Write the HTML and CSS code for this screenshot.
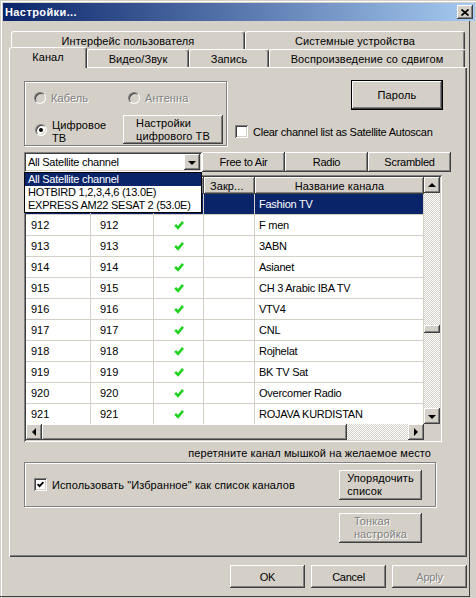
FILE: index.html
```html
<!DOCTYPE html>
<html lang="ru">

<head>
  <meta charset="UTF-8">
  <title>Настройки...</title>
  <link rel="stylesheet" href="styles.css">
</head>

<body>
  <div class="window">
    <div class="titlebar">
      <span class="title">Настройки...</span>
      <span class="close">
        <svg width="8" height="7" viewBox="0 0 8 7"><path d="M0.5 0.5 L7.5 6.5 M7.5 0.5 L0.5 6.5" stroke="#000" stroke-width="1.7" fill="none"/></svg>
      </span>
    </div>

    <div class="client">
      <div class="tabs">
        <div class="tab-row back">
          <div class="tab w-ui">Интерфейс пользователя</div>
          <div class="tab w-sys">Системные устройства</div>
        </div>
        <div class="tab-row front">
          <div class="tab w-chan active">Канал</div>
          <div class="tab w-video">Видео/Звук</div>
          <div class="tab w-rec">Запись</div>
          <div class="tab w-shift">Воспроизведение со сдвигом</div>
        </div>
      </div>

      <div class="page">
        <div class="top-row">
          <div class="group group-mode">
            <div class="radio-row">
              <div class="radio-item"><span class="radio off"></span><span class="disabled">Кабель</span></div>
              <div class="radio-item"><span class="radio off"></span><span class="disabled">Антенна</span></div>
            </div>
            <div class="dtv-row">
              <div class="radio-item dtv"><span class="radio on"></span><span class="two-line">Цифровое<br>ТВ</span></div>
              <div class="btn btn-dtv"><span class="btn-lines">Настройки<br>цифрового ТВ</span></div>
            </div>
          </div>

          <div class="right-col">
            <div class="btn btn-default btn-pass">Пароль</div>
            <div class="check-row">
              <span class="check"></span>
              <span class="lat">Clear channel list as Satellite Autoscan</span>
            </div>
          </div>
        </div>

        <div class="filter-row">
          <div class="combo">
            <span class="lat">All Satellite channel</span>
            <span class="combo-btn"><span class="arr-down"></span></span>
          </div>
          <div class="btn filter-btn lat">Free to Air</div>
          <div class="btn filter-btn lat">Radio</div>
          <div class="btn filter-btn lat">Scrambled</div>
        </div>

        <div class="list lat">
          <div class="grid-body">
            <!-- first three headers sit under the open combo list -->
            <div class="hdr">
              <div class="hdr-cell c1"></div>
              <div class="hdr-cell c2"></div>
              <div class="hdr-cell c3"></div>
              <div class="hdr-cell c4 cyr">Закр...</div>
              <div class="hdr-cell c5 center cyr">Название канала</div>
            </div>
            <div class="row sel">
              <div class="cell c1"></div><div class="cell c2"></div><div class="cell c3"></div><div class="cell c4"></div><div class="cell c5">Fashion TV</div>
            </div>
            <div class="row">
              <div class="cell c1">912</div><div class="cell c2">912</div><div class="cell c3"><svg class="ok" width="10" height="10" viewBox="0 0 10 10"><path d="M1.2 4.8 L4 7.8 L9 1.8" /></svg></div><div class="cell c4"></div><div class="cell c5">F men</div>
            </div>
            <div class="row">
              <div class="cell c1">913</div><div class="cell c2">913</div><div class="cell c3"><svg class="ok" width="10" height="10" viewBox="0 0 10 10"><path d="M1.2 4.8 L4 7.8 L9 1.8" /></svg></div><div class="cell c4"></div><div class="cell c5">3ABN</div>
            </div>
            <div class="row">
              <div class="cell c1">914</div><div class="cell c2">914</div><div class="cell c3"><svg class="ok" width="10" height="10" viewBox="0 0 10 10"><path d="M1.2 4.8 L4 7.8 L9 1.8" /></svg></div><div class="cell c4"></div><div class="cell c5">Asianet</div>
            </div>
            <div class="row">
              <div class="cell c1">915</div><div class="cell c2">915</div><div class="cell c3"><svg class="ok" width="10" height="10" viewBox="0 0 10 10"><path d="M1.2 4.8 L4 7.8 L9 1.8" /></svg></div><div class="cell c4"></div><div class="cell c5">CH 3 Arabic IBA TV</div>
            </div>
            <div class="row">
              <div class="cell c1">916</div><div class="cell c2">916</div><div class="cell c3"><svg class="ok" width="10" height="10" viewBox="0 0 10 10"><path d="M1.2 4.8 L4 7.8 L9 1.8" /></svg></div><div class="cell c4"></div><div class="cell c5">VTV4</div>
            </div>
            <div class="row">
              <div class="cell c1">917</div><div class="cell c2">917</div><div class="cell c3"><svg class="ok" width="10" height="10" viewBox="0 0 10 10"><path d="M1.2 4.8 L4 7.8 L9 1.8" /></svg></div><div class="cell c4"></div><div class="cell c5">CNL</div>
            </div>
            <div class="row">
              <div class="cell c1">918</div><div class="cell c2">918</div><div class="cell c3"><svg class="ok" width="10" height="10" viewBox="0 0 10 10"><path d="M1.2 4.8 L4 7.8 L9 1.8" /></svg></div><div class="cell c4"></div><div class="cell c5">Rojhelat</div>
            </div>
            <div class="row">
              <div class="cell c1">919</div><div class="cell c2">919</div><div class="cell c3"><svg class="ok" width="10" height="10" viewBox="0 0 10 10"><path d="M1.2 4.8 L4 7.8 L9 1.8" /></svg></div><div class="cell c4"></div><div class="cell c5">BK TV Sat</div>
            </div>
            <div class="row">
              <div class="cell c1">920</div><div class="cell c2">920</div><div class="cell c3"><svg class="ok" width="10" height="10" viewBox="0 0 10 10"><path d="M1.2 4.8 L4 7.8 L9 1.8" /></svg></div><div class="cell c4"></div><div class="cell c5">Overcomer Radio</div>
            </div>
            <div class="row">
              <div class="cell c1">921</div><div class="cell c2">921</div><div class="cell c3"><svg class="ok" width="10" height="10" viewBox="0 0 10 10"><path d="M1.2 4.8 L4 7.8 L9 1.8" /></svg></div><div class="cell c4"></div><div class="cell c5">ROJAVA KURDISTAN</div>
            </div>
          </div>

          <div class="vscroll">
            <span class="sb-btn"><span class="arr-up"></span></span>
            <div class="sb-track v"><span class="sb-thumb v"></span></div>
            <span class="sb-btn"><span class="arr-down"></span></span>
          </div>

          <div class="hscroll">
            <span class="sb-btn"><span class="arr-left"></span></span>
            <span class="sb-thumb h"></span>
            <div class="sb-track h"></div>
            <span class="sb-btn"><span class="arr-right"></span></span>
          </div>

          <div class="corner"></div>
        </div>

        <div class="hint">перетяните канал мышкой на желаемое место</div>

        <div class="group group-fav">
          <span class="check">
            <svg width="7" height="7" viewBox="0 0 7 7"><path d="M0.6 3 L2.6 5.2 L6.4 1" stroke="#000" stroke-width="1.8" fill="none"/></svg>
          </span>
          <span class="fav-label">Использовать "Избранное" как список каналов</span>
          <div class="btn btn-sort"><span class="btn-lines">Упорядочить<br>список</span></div>
        </div>

        <div class="btn btn-fine"><span class="btn-lines disabled">Тонкая<br>настройка</span></div>

        <div class="dropdown lat">
          <div class="dd-item sel">All Satellite channel</div>
          <div class="dd-item">HOTBIRD 1,2,3,4,6 (13.0E)</div>
          <div class="dd-item">EXPRESS AM22 SESAT 2 (53.0E)</div>
        </div>
      </div>

      <div class="footer lat">
        <div class="btn btn-foot">OK</div>
        <div class="btn btn-foot">Cancel</div>
        <div class="btn btn-foot"><span class="disabled">Apply</span></div>
      </div>
    </div>
  </div>
</body>

</html>
```

FILE: styles.css
```css
* {
  box-sizing: border-box;
}

body {
  margin: 0;
  background: #d4d0c8;
  font-family: "Liberation Sans", Arial, sans-serif;
  font-size: 11px;
  letter-spacing: 0.1px;
  color: #000;
}

/* latin text runs narrower than cyrillic in the original font */
.lat {
  letter-spacing: -0.25px;
}

.lat .cyr {
  letter-spacing: 0.1px;
}

.window {
  width: 476px;
  height: 598px;
  padding-top: 3px;
  overflow: hidden;
  box-shadow: inset 1px 1px #d4d0c8, inset 2px 2px #fff;
}

.titlebar {
  height: 18px;
  margin: 0 1px 0 3px;
  padding: 0 2px;
  background: linear-gradient(to right, #0a246a, #a6caf0);
  display: flex;
  align-items: center;
  justify-content: space-between;
}

.title {
  color: #fff;
  font-weight: bold;
  letter-spacing: 0.4px;
}

.close {
  width: 16px;
  height: 14px;
  background: #d4d0c8;
  box-shadow: inset -1px -1px #404040, inset 1px 1px #fff, inset -2px -2px #808080;
  display: flex;
  align-items: center;
  justify-content: center;
}

.client {
  width: 470px;
  height: 576px;
  padding: 10px 2px 0 9px;
  border-right: 1px solid #404040;
  border-bottom: 1px solid #404040;
}

/* tabs */
.tabs {
  height: 36px;
}

.tab-row {
  display: flex;
}

.tab-row.back {
  height: 18px;
  padding-left: 2px;
}

.tab-row.front {
  height: 20px;
  margin-top: -2px;
  align-items: flex-end;
}

.tab {
  height: 18px;
  background: #d4d0c8;
  border-top: 1px solid #fff;
  border-left: 1px solid #fff;
  border-right: 1px solid #404040;
  border-radius: 3px 3px 0 0;
  box-shadow: inset -1px 0 #808080;
  display: flex;
  align-items: center;
  justify-content: center;
}

.tab.active {
  height: 21px;
  margin-bottom: -1px;
  padding-bottom: 3px;
  position: relative;
  z-index: 1;
}

.w-ui { width: 234px; }
.w-sys { width: 220px; }
.w-chan { width: 78px; }
.w-video { width: 102px; }
.w-rec { width: 80px; }
.w-shift { width: 196px; }

/* tab page */
.page {
  height: 490px;
  position: relative;
  padding: 13px 0 0 15px;
  box-shadow: inset 1px 1px #fff, inset -1px -1px #404040, inset -2px -2px #808080;
}

.btn {
  background: #d4d0c8;
  box-shadow: inset -1px -1px #404040, inset 1px 1px #fff, inset -2px -2px #808080;
  display: flex;
  align-items: center;
  justify-content: center;
  flex: none;
}

.btn-default {
  border: 1px solid #000;
}

.btn-lines {
  display: inline-block;
  text-align: left;
  line-height: 13px;
}

.disabled {
  color: #808080;
  text-shadow: 1px 1px 0 #fff;
}

.group {
  border: 1px solid #808080;
  box-shadow: inset 1px 1px #fff, 1px 1px #fff;
}

.top-row {
  display: flex;
  height: 66px;
}

.group-mode {
  width: 203px;
  height: 65px;
  margin-top: 1px;
  padding: 9px 0 0 9px;
}

.radio-row {
  display: flex;
  height: 13px;
}

.radio-item {
  display: flex;
  align-items: center;
  gap: 5px;
  width: 94px;
}

.dtv-row {
  display: flex;
  margin-top: 11px;
}

.radio-item.dtv {
  width: 89px;
  padding-left: 1px;
}

.two-line {
  line-height: 13px;
  padding-top: 4px;
}

.radio {
  width: 12px;
  height: 12px;
  flex: none;
  position: relative;
  border-radius: 50%;
  background: #fff;
  border: 1px solid;
  border-color: #808080 #fff #fff #808080;
  box-shadow: inset 1px 1px #404040, inset -1px -1px #d4d0c8;
}

.radio.off {
  background: #d4d0c8;
}

.radio.on::after {
  content: "";
  position: absolute;
  left: 3px;
  top: 3px;
  width: 4px;
  height: 4px;
  border-radius: 50%;
  background: #000;
}

.btn-dtv {
  width: 100px;
  height: 29px;
}

.right-col {
  margin-left: 8px;
}

.btn-pass {
  width: 92px;
  height: 30px;
  margin-left: 116px;
}

.check-row {
  display: flex;
  align-items: center;
  gap: 5px;
  margin-top: 15px;
  white-space: nowrap;
}

.check {
  width: 13px;
  height: 13px;
  flex: none;
  background: #fff;
  box-shadow: inset 1px 1px #808080, inset -1px -1px #fff, inset 2px 2px #404040, inset -2px -2px #d4d0c8;
  display: flex;
  align-items: center;
  justify-content: center;
}

/* filter row */
.filter-row {
  display: flex;
  height: 20px;
  margin-top: 6px;
}

.combo {
  width: 178px;
  height: 20px;
  padding-left: 4px;
  background: #fff;
  box-shadow: inset 1px 1px #808080, inset -1px -1px #fff, inset 2px 2px #404040, inset -2px -2px #d4d0c8;
  display: flex;
  align-items: center;
}

.combo-btn,
.sb-btn {
  width: 16px;
  height: 16px;
  flex: none;
  background: #d4d0c8;
  box-shadow: inset -1px -1px #404040, inset 1px 1px #fff, inset -2px -2px #808080;
  display: flex;
  align-items: center;
  justify-content: center;
}

.combo-btn {
  margin-left: auto;
  margin-right: 2px;
}

.filter-btn {
  width: 83px;
  height: 20px;
}

.arr-down,
.arr-up {
  width: 0;
  height: 0;
  border-left: 4px solid transparent;
  border-right: 4px solid transparent;
}

.arr-down {
  border-top: 4px solid #000;
  margin-top: 1px;
}

.arr-up {
  border-bottom: 4px solid #000;
  margin-top: -1px;
}

.arr-left,
.arr-right {
  width: 0;
  height: 0;
  border-top: 4px solid transparent;
  border-bottom: 4px solid transparent;
}

.arr-left {
  border-right: 4px solid #000;
  margin-left: -1px;
}

.arr-right {
  border-left: 4px solid #000;
}

/* channel list */
.list {
  width: 418px;
  height: 267px;
  margin-top: 3px;
  padding: 2px;
  box-shadow: inset 1px 1px #808080, inset -1px -1px #fff, inset 2px 2px #404040, inset -2px -2px #d4d0c8;
  display: grid;
  grid-template-columns: 398px 16px;
  grid-template-rows: 247px 16px;
}

.grid-body {
  overflow: hidden;
  background: #fff;
}

.hdr {
  display: flex;
  height: 17px;
  background: #d4d0c8;
}

.hdr-cell {
  height: 17px;
  padding-left: 6px;
  box-shadow: inset -1px -1px #404040, inset 1px 1px #fff, inset -2px -2px #808080;
  display: flex;
  align-items: center;
  white-space: nowrap;
  overflow: hidden;
}

.hdr-cell.center {
  justify-content: center;
  padding-left: 0;
}

.row {
  display: flex;
  height: 21px;
  border-bottom: 1px solid #d4d0c8;
}

.row.sel {
  background: #0a246a;
  color: #fff;
}

.cell {
  border-right: 1px solid #d4d0c8;
  display: flex;
  align-items: center;
  white-space: nowrap;
  letter-spacing: 0;
}

.c1 { width: 65px; padding-left: 5px; }
.c2 { width: 63px; padding-left: 9px; }
.c3 { width: 50px; justify-content: center; }
.c4 { width: 51px; }
.c5 { flex: 1; padding-left: 4px; letter-spacing: -0.25px; }

.ok path {
  fill: none;
  stroke: #1fd41f;
  stroke-width: 2.6;
}

.vscroll {
  display: flex;
  flex-direction: column;
}

.hscroll {
  display: flex;
}

.sb-track {
  flex: 1;
  background: repeating-conic-gradient(#fff 0 25%, #d4d0c8 0 50%) 0 0 / 2px 2px;
}

.sb-thumb {
  display: block;
  background: #d4d0c8;
  box-shadow: inset -1px -1px #404040, inset 1px 1px #fff, inset -2px -2px #808080;
}

.sb-thumb.v {
  width: 16px;
  height: 8px;
  margin-top: 132px;
}

.sb-thumb.h {
  width: 305px;
  height: 16px;
  flex: none;
}

.corner {
  background: #d4d0c8;
}

.hint {
  width: 407px;
  height: 13px;
  margin-top: 5px;
  line-height: 13px;
  text-align: right;
}

.group-fav {
  width: 412px;
  height: 45px;
  margin-top: 2px;
  padding: 0 13px 0 9px;
  display: flex;
  align-items: center;
}

.fav-label {
  margin-left: 5px;
  white-space: nowrap;
}

.btn-sort {
  width: 83px;
  height: 30px;
  margin-left: auto;
}

.btn-fine {
  width: 83px;
  height: 30px;
  margin: 6px 0 0 315px;
}

/* open combo list */
.dropdown {
  position: absolute;
  left: 15px;
  top: 105px;
  width: 178px;
  border: 1px solid #000;
  background: #fff;
  z-index: 2;
}

.dd-item {
  height: 13px;
  line-height: 13px;
  padding-left: 3px;
  white-space: nowrap;
}

.dd-item.sel {
  background: #0a246a;
  color: #fff;
}

/* dialog buttons */
.footer {
  display: flex;
  justify-content: flex-end;
  gap: 6px;
  margin-top: 8px;
}

.btn-foot {
  width: 75px;
  height: 23px;
}
```
